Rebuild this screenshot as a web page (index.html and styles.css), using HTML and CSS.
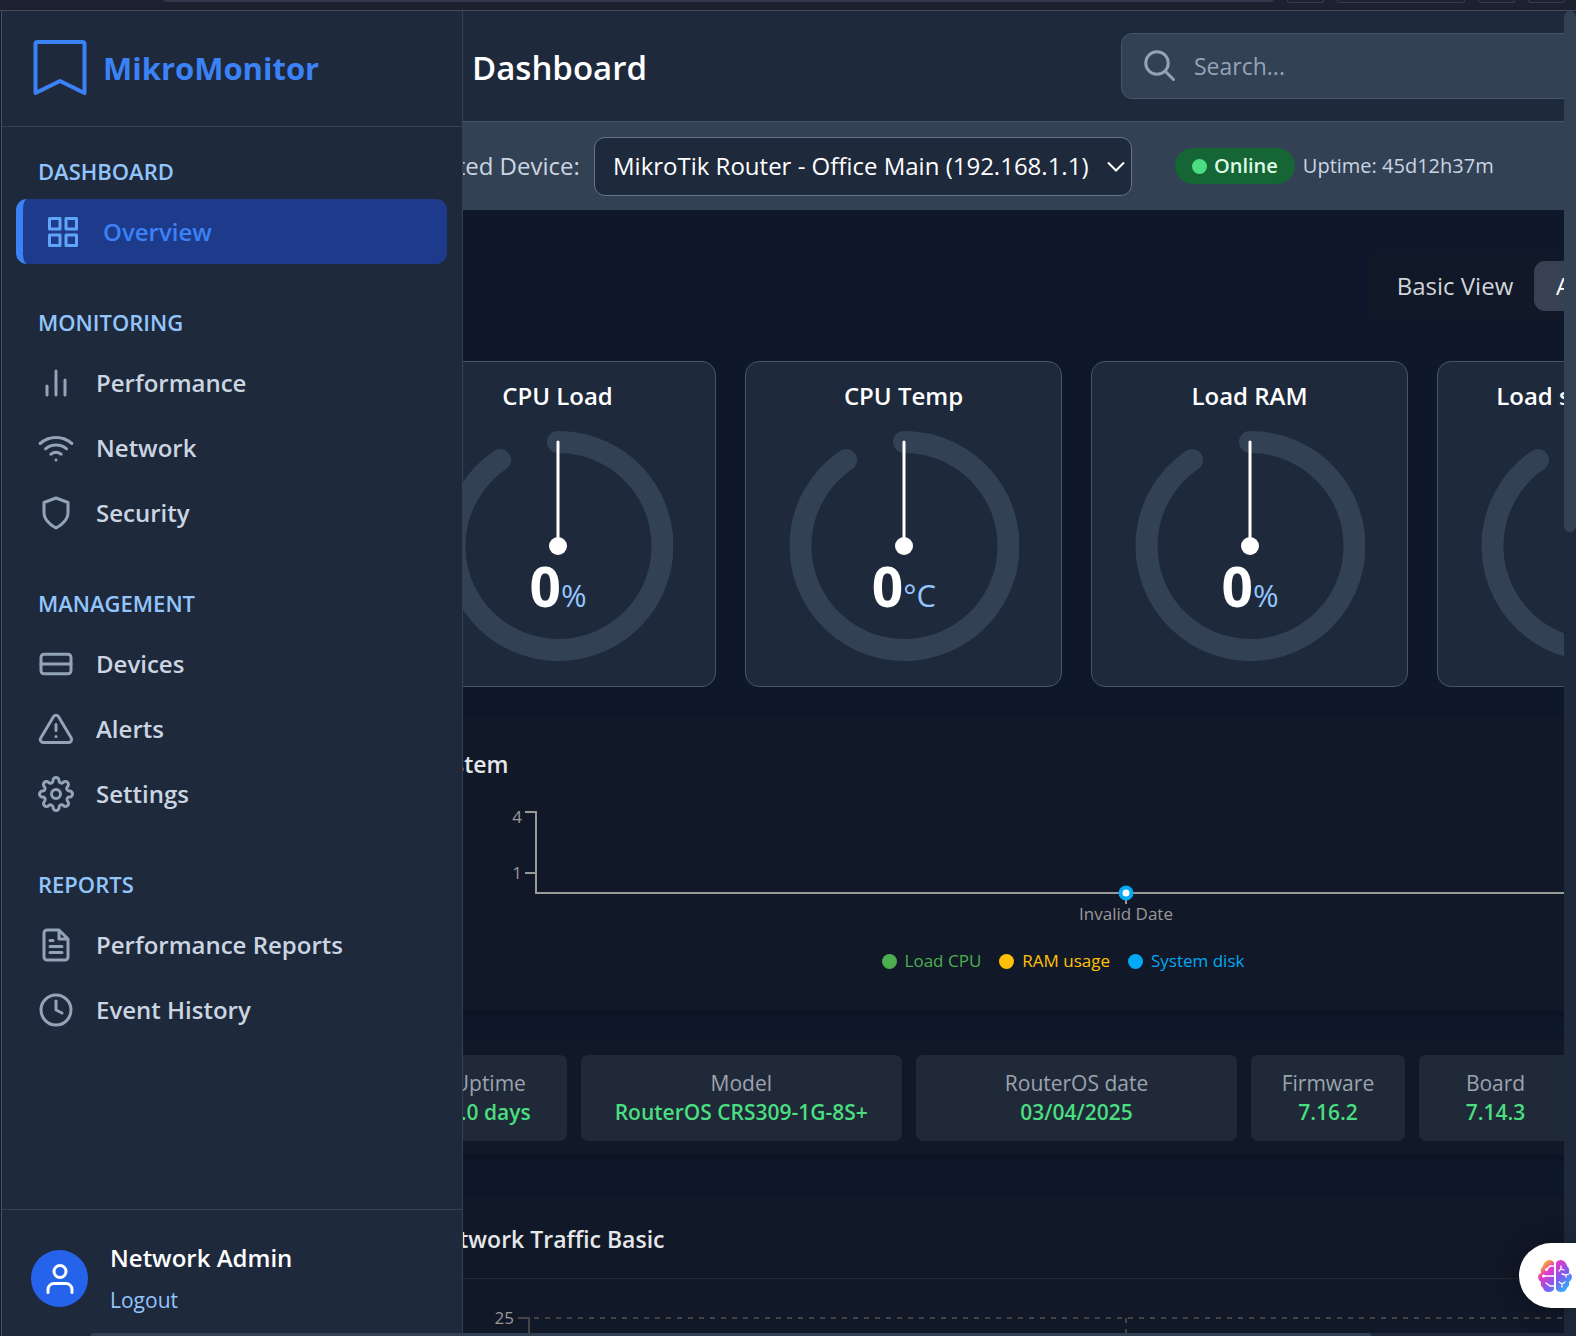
FILE: index.html
```html
<!DOCTYPE html>
<html lang="en">
<head>
<meta charset="utf-8">
<title>MikroMonitor - Dashboard</title>
<link rel="stylesheet" href="styles.css">
</head>
<body>
<svg class="defs" aria-hidden="true">
  <defs>
    <linearGradient id="brain-fill" x1="0" y1="0" x2="1" y2="1">
      <stop offset=".12" stop-color="#fbb914"/>
      <stop offset=".32" stop-color="#e836c8"/>
      <stop offset=".6" stop-color="#7b5cf0"/>
      <stop offset=".9" stop-color="#2fb4fb"/>
    </linearGradient>
    <symbol id="gauge" viewBox="0 0 230 230">
      <path d="M115 11A104 104 0 1 1 57 29" fill="none" stroke="#334155" stroke-width="22" stroke-linecap="round"/>
      <path d="M115 11V115" stroke="#fff" stroke-width="3" stroke-linecap="round"/>
      <circle cx="115" cy="115" r="9" fill="#fff"/>
    </symbol>
  </defs>
</svg>

<div class="window">
  <div class="toolbar" aria-hidden="true">
    <span class="address"></span>
    <span class="pill"></span>
    <span class="pill wide"></span>
    <span class="pill"></span>
    <span class="pill"></span>
  </div>

  <div class="frame">
    <div class="edge"></div>

    <main class="main">
      <div class="canvas">
        <header class="topbar">
          <h1>Dashboard</h1>
          <label class="search">
            <svg class="icon" viewBox="0 0 24 24" aria-hidden="true"><circle cx="10" cy="10" r="7.5"/><path d="M15.500 15.500L21 21"/></svg>
            <input type="search" placeholder="Search..." aria-label="Search">
          </label>
        </header>

        <div class="devicebar">
          <label for="device">Selected Device:</label>
          <div class="select">
            <select id="device"><option>MikroTik Router - Office Main (192.168.1.1)</option></select>
            <svg viewBox="0 0 18 12" aria-hidden="true"><path d="M1 1.500L9 9.500L17 1.500"/></svg>
          </div>
          <div class="status">
            <span class="online"><i></i>Online</span>
            <span>Uptime: 45d12h37m</span>
          </div>
        </div>

        <div class="content">
          <div class="views">
            <div class="toggle">
              <button type="button">Basic View</button>
              <button type="button" class="on">Advanced View</button>
            </div>
          </div>

          <section class="gauges">
            <article class="card">
              <h2>CPU Load</h2>
              <svg viewBox="0 0 230 230"><use href="#gauge"/><text x="115" y="176">0<tspan>%</tspan></text></svg>
            </article>
            <article class="card">
              <h2>CPU Temp</h2>
              <svg viewBox="0 0 230 230"><use href="#gauge"/><text x="115" y="176">0<tspan>°C</tspan></text></svg>
            </article>
            <article class="card">
              <h2>Load RAM</h2>
              <svg viewBox="0 0 230 230"><use href="#gauge"/><text x="115" y="176">0<tspan>%</tspan></text></svg>
            </article>
            <article class="card">
              <h2>Load system disk</h2>
              <svg viewBox="0 0 230 230"><use href="#gauge"/><text x="115" y="176">0<tspan>%</tspan></text></svg>
            </article>
          </section>

          <section class="panel system">
            <h2>System</h2>
            <svg class="chart" height="164">
              <path class="axis" d="M97 29H108V110H1290M97 90H108M698 110V121"/>
              <text x="94" y="40" text-anchor="end">4</text>
              <text x="94" y="96" text-anchor="end">1</text>
              <text x="698" y="137" text-anchor="middle">Invalid Date</text>
              <circle cx="698" cy="110" r="5.500" fill="#fff" stroke="#03a9f4" stroke-width="4"/>
            </svg>
            <ul class="legend">
              <li class="cpu">Load CPU</li>
              <li class="ram">RAM usage</li>
              <li class="disk">System disk</li>
            </ul>
          </section>

          <dl class="panel facts">
            <div><dt>Uptime</dt><dd>3.0 days</dd></div>
            <div class="two"><dt>Model</dt><dd>RouterOS CRS309-1G-8S+</dd></div>
            <div class="two"><dt>RouterOS date</dt><dd>03/04/2025</dd></div>
            <div><dt>Firmware</dt><dd>7.16.2</dd></div>
            <div><dt>Board</dt><dd>7.14.3</dd></div>
          </dl>

          <section class="panel traffic">
            <h2>Network Traffic Basic</h2>
            <svg class="chart" height="240">
              <path class="grid" d="M119 39H130V240"/>
              <path class="grid dashed" d="M135 39H1320M727 39V240"/>
              <text x="115" y="45" text-anchor="end">25</text>
            </svg>
          </section>
        </div>
      </div>
    </main>

    <aside class="sidebar">
      <div class="brand">
        <svg viewBox="0 0 54 56" aria-hidden="true"><path d="M2.500 4V53L27 41L51.500 53V4Q51.500 2 49.500 2H4.500Q2.500 2 2.500 4Z"/></svg>
        <span>MikroMonitor</span>
      </div>
      <nav>
        <section>
          <h3>DASHBOARD</h3>
          <a href="#" class="active"><svg class="icon" viewBox="0 0 24 24"><rect x="3" y="3" width="7" height="7"/><rect x="14" y="3" width="7" height="7"/><rect x="14" y="14" width="7" height="7"/><rect x="3" y="14" width="7" height="7"/></svg>Overview</a>
        </section>
        <section>
          <h3>MONITORING</h3>
          <a href="#"><svg class="icon" viewBox="0 0 24 24"><path d="M18 20V10M12 20V4M6 20V14"/></svg>Performance</a>
          <a href="#"><svg class="icon" viewBox="0 0 24 24"><path d="M5 12.550a11 11 0 0 1 14.080 0M1.420 9a16 16 0 0 1 21.160 0M8.530 16.110a6 6 0 0 1 6.950 0M12 20h.01"/></svg>Network</a>
          <a href="#"><svg class="icon" viewBox="0 0 24 24"><path d="M12 22s8-4 8-10V5l-8-3-8 3v7c0 6 8 10 8 10z"/></svg>Security</a>
        </section>
        <section>
          <h3>MANAGEMENT</h3>
          <a href="#"><svg class="icon" viewBox="0 0 24 24"><rect x="2" y="5.500" width="20" height="13" rx="2"/><path d="M2 12H22"/></svg>Devices</a>
          <a href="#"><svg class="icon" viewBox="0 0 24 24"><path d="M10.290 3.860L1.820 18a2 2 0 0 0 1.710 3h16.940a2 2 0 0 0 1.710-3L13.710 3.860a2 2 0 0 0-3.420 0zM12 9v4M12 17h.01"/></svg>Alerts</a>
          <a href="#"><svg class="icon" viewBox="0 0 24 24"><circle cx="12" cy="12" r="3"/><path d="M19.400 15a1.650 1.650 0 0 0 .33 1.820l.06.06a2 2 0 0 1-2.830 2.830l-.06-.06a1.650 1.650 0 0 0-1.820-.33 1.650 1.650 0 0 0-1 1.510V21a2 2 0 0 1-4 0v-.09A1.650 1.650 0 0 0 9 19.400a1.650 1.650 0 0 0-1.820.33l-.06.06a2 2 0 0 1-2.830-2.830l.06-.06a1.650 1.650 0 0 0 .33-1.820 1.650 1.650 0 0 0-1.510-1H3a2 2 0 0 1 0-4h.09A1.650 1.650 0 0 0 4.600 9a1.650 1.650 0 0 0-.33-1.820l-.06-.06a2 2 0 0 1 2.830-2.830l.06.06a1.650 1.650 0 0 0 1.820.33H9a1.650 1.650 0 0 0 1-1.510V3a2 2 0 0 1 4 0v.09a1.650 1.650 0 0 0 1 1.510 1.650 1.650 0 0 0 1.820-.33l.06-.06a2 2 0 0 1 2.830 2.830l-.06.06a1.650 1.650 0 0 0-.33 1.820V9a1.650 1.650 0 0 0 1.510 1H21a2 2 0 0 1 0 4h-.09a1.650 1.650 0 0 0-1.510 1z"/></svg>Settings</a>
        </section>
        <section>
          <h3>REPORTS</h3>
          <a href="#"><svg class="icon" viewBox="0 0 24 24"><path d="M14 2H6a2 2 0 0 0-2 2v16a2 2 0 0 0 2 2h12a2 2 0 0 0 2-2V8zM14 2v6h6M16 13H8M16 17H8M10 9H8"/></svg>Performance Reports</a>
          <a href="#"><svg class="icon" viewBox="0 0 24 24"><circle cx="12" cy="12" r="10"/><path d="M12 6v6l4 2"/></svg>Event History</a>
        </section>
      </nav>
      <div class="user">
        <span class="avatar"><svg class="icon" viewBox="0 0 24 24" aria-hidden="true"><path d="M20 21v-2a4 4 0 0 0-4-4H8a4 4 0 0 0-4 4v2"/><circle cx="12" cy="7" r="4"/></svg></span>
        <div>
          <strong>Network Admin</strong>
          <a href="#">Logout</a>
        </div>
      </div>
    </aside>

    <div class="vbar" aria-hidden="true"><i></i></div>
    <div class="hbar" aria-hidden="true"><i></i></div>
  </div>

  <button type="button" class="assistant" aria-label="Assistant">
    <svg viewBox="0 0 34 32" aria-hidden="true">
      <path fill="url(#brain-fill)" d="M16 3V29Q15 32 11 32Q6 32 5 28Q2 26 3 22Q0 20 0 17Q0 14 3 13Q2 8 5 6Q6 1 11 0Q15 0 16 3ZM18 3Q19 0 23 0Q28 1 29 6Q32 8 31 13Q34 14 34 17Q34 20 31 22Q32 26 29 28Q28 32 23 32Q19 32 18 29Z"/>
      <path fill="none" stroke="#fff" stroke-width="1.300" stroke-linecap="round" d="M16 6H12L9 9M6 16H16M16 26H12L8 23M23 6V9L21 11M23 9L26 10M24 14L28 15L31 14M28 15V17M21 22L24 24L27 22M24 24V27"/>
      <circle cx="8.500" cy="9.500" r="1.500" fill="#fff"/><circle cx="5.500" cy="16" r="1.500" fill="#fff"/>
    </svg>
  </button>
</div>
</body>
</html>
```
FILE: styles.css
```css
* { box-sizing: border-box; }

body {
  margin: 0;
  background: #0f172a;
  color: #fff;
  font-family: "Open Sans", "Noto Sans", sans-serif;
  font-size: 24px;
  line-height: 38px;
}

h1, h2, h3, dl, dd, ul { margin: 0; padding: 0; }
button, input, select { font: inherit; color: inherit; }
a { text-decoration: none; }
svg { display: block; flex: none; }

.defs { position: absolute; width: 0; height: 0; }

.icon {
  width: 36px;
  height: 36px;
  fill: none;
  stroke: currentColor;
  stroke-width: 2;
  stroke-linecap: round;
  stroke-linejoin: round;
}

.window {
  position: relative;
  display: flex;
  flex-direction: column;
  height: 100vh;
  overflow: hidden;
}

/* Bottom edge of the browser toolbar */
.toolbar {
  flex: none;
  display: flex;
  gap: 13px;
  height: 11px;
  padding: 0 11px 0 163px;
  background: #1c2130;
  border-bottom: 1px solid #454a5c;
}
.address { flex: 1; height: 2px; background: #31364b; border-radius: 0 0 4px 4px; }
.pill { width: 37px; height: 3px; border: 1px solid #363c50; border-top: 0; border-radius: 0 0 8px 8px; }
.pill.wide { width: 128px; }

.frame {
  position: relative;
  flex: 1;
  min-height: 0;
  display: grid;
  grid-template: minmax(0, 1fr) 3px / 2px minmax(0, 1fr) 12px;
}
.edge { grid-row: 1 / 3; background: #131a2b; border-right: 1px solid #4c5265; }
.main { grid-area: 1 / 2; overflow: hidden; }

.canvas { width: calc(100% + 190px); }

.vbar { grid-area: 1 / 3 / 3 / 4; background: #1e293b; }
.vbar i { display: block; height: 39.3%; background: #334155; border-radius: 6px; }
.hbar { grid-area: 2 / 2; z-index: 3; padding: 0 193px 0 89px; background: #1e293b; }
.hbar i { display: block; height: 3px; background: #334155; border-radius: 6px 6px 0 0; }

/* Header */
.topbar {
  display: flex;
  justify-content: space-between;
  align-items: center;
  height: 111px;
  padding-left: 470px;
  background: #1e293b;
  border-bottom: 1px solid #475569;
}
.topbar h1 { padding-top: 3px; font-size: 33px; font-weight: 600; }
.search {
  display: flex;
  align-items: center;
  gap: 16px;
  width: 633px;
  height: 66px;
  padding: 0 20px;
  background: #334155;
  border: 1px solid #475569;
  border-radius: 11px;
  color: #94a3b8;
  font-size: 23px;
}
.search input { flex: 1; min-width: 0; padding: 0; background: none; border: 0; outline: 0; }
.search input::placeholder { color: #94a3b8; opacity: 1; }

/* Device bar */
.devicebar {
  display: flex;
  align-items: center;
  height: 88px;
  padding-left: 397px;
  background: #334155;
  color: #cbd5e1;
}
.devicebar > label { width: 180px; text-align: right; white-space: nowrap; }
.select { position: relative; width: 538px; margin: 0 43px 0 15px; }
.select select {
  display: block;
  width: 100%;
  height: 59px;
  padding: 0 36px 0 18px;
  appearance: none;
  background: #1e293b;
  border: 1px solid #64748b;
  border-radius: 11px;
  color: #fff;
}
.select svg {
  position: absolute;
  top: 24px;
  right: 7px;
  width: 18px;
  height: 12px;
  fill: none;
  stroke: #fff;
  stroke-width: 2;
}
.status { display: flex; align-items: center; gap: 8px; font-size: 21px; white-space: nowrap; }
.online {
  display: flex;
  align-items: center;
  gap: 7px;
  height: 36px;
  padding: 0 17px;
  background: #166534;
  border-radius: 18px;
  color: #dcfce7;
  font-weight: 600;
}
.status span { font-size: 20px; }
.online i { width: 15px; height: 15px; background: #4ade80; border-radius: 50%; }

/* Content */
.content { padding: 43px 0 0 397px; }
.views { display: flex; justify-content: flex-end; margin-bottom: 42px; }
.toggle { display: flex; padding: 8px; background: #111827; border-radius: 11px; }
.toggle button {
  height: 50px;
  min-width: 158px;
  padding: 0 20px;
  background: none;
  border: 0;
  border-radius: 11px;
  color: #d1d5db;
  white-space: nowrap;
}
.toggle .on { min-width: 212px; background: #374151; color: #fff; }

.gauges { display: grid; grid-template-columns: repeat(4, 1fr); gap: 29px; margin-bottom: 29px; }
.card {
  display: flex;
  flex-direction: column;
  align-items: center;
  gap: 16px;
  padding: 15px 0 25px;
  background: #1e293b;
  border: 1px solid #475569;
  border-radius: 14px;
}
h2 { font-size: 24px; font-weight: 600; }
.card svg { width: 230px; height: 230px; }
.card text { fill: #fff; font-size: 55px; font-weight: 700; text-anchor: middle; }
.card tspan { fill: #93c5fd; font-size: 31px; font-weight: 400; }

.panel { background: #111827; box-shadow: 0 4px 10px rgba(0, 0, 0, .2); }
.panel h2 { color: #e5e7eb; font-size: 23px; }
.system { margin-bottom: 29px; padding: 29px 29px 36px; }
.chart { width: 100%; overflow: hidden; }
.chart text { fill: #999; font-size: 17px; }
.axis { fill: none; stroke: #999; stroke-width: 2; }
.grid { fill: none; stroke: #444; stroke-width: 2; }
.dashed { stroke-dasharray: 5 6; }

.legend {
  display: flex;
  justify-content: center;
  gap: 18px;
  padding-right: 27px;
  list-style: none;
  font-size: 17px;
  line-height: 28px;
}
.legend li { display: flex; align-items: center; gap: 8px; }
.legend li::before { content: ""; width: 15px; height: 15px; background: currentColor; border-radius: 50%; }
.cpu { color: #4caf50; }
.ram { color: #ffc107; }
.disk { color: #03a9f4; }

.facts {
  display: grid;
  grid-template-columns: repeat(8, 1fr);
  gap: 14px;
  margin-bottom: 43px;
  padding: 15px 14px 14px;
  line-height: 29px;
  text-align: center;
  white-space: nowrap;
}
.facts div { padding: 14px 0; background: #1f2937; border-radius: 7px; }
.facts .two { grid-column: span 2; }
dt { color: #9ca3af; font-size: 21px; }
dd { color: #4ade80; font-size: 21px; font-weight: 600; }

.traffic h2 { padding: 22px 29px 20px; border-bottom: 1px solid #1f2937; }

/* Sidebar lies over the page */
.sidebar {
  position: absolute;
  inset: 0 auto 0 2px;
  z-index: 2;
  display: flex;
  flex-direction: column;
  width: 461px;
  background: #1e293b;
  border-right: 1px solid #334155;
}
.brand {
  display: flex;
  align-items: center;
  gap: 16px;
  height: 116px;
  padding: 0 31px 2px;
  border-bottom: 1px solid #334155;
  color: #3b82f6;
  font-size: 31px;
  font-weight: 700;
}
.brand svg { width: 54px; height: 56px; fill: none; stroke: currentColor; stroke-width: 4; stroke-linejoin: round; }

nav { flex: 1; display: flex; flex-direction: column; gap: 44px; padding: 30px 15px 0 14px; }
nav h3 {
  margin-bottom: 14px;
  padding-left: 22px;
  color: #93c5fd;
  font-size: 22px;
  font-weight: 600;
  line-height: 28px;
}
nav a {
  display: flex;
  align-items: center;
  gap: 22px;
  height: 65px;
  padding-left: 22px;
  border-radius: 11px;
  color: #cbd5e1;
  font-weight: 600;
}
nav .icon { color: #94a3b8; }
nav .active { background: #1e3a8a; border-left: 7px solid #3b82f6; color: #3b82f6; }
nav .active .icon { color: #60a5fa; }

.user {
  display: flex;
  align-items: center;
  gap: 22px;
  height: 127px;
  padding: 11px 29px 0;
  border-top: 1px solid #334155;
}
.user div { display: flex; flex-direction: column; gap: 4px; }
.user strong { font-weight: 600; }
.user a { color: #93c5fd; font-size: 21px; }
.avatar {
  display: grid;
  place-items: center;
  width: 57px;
  height: 57px;
  background: #2563eb;
  border-radius: 50%;
}

.assistant {
  position: absolute;
  right: 0;
  bottom: 28px;
  z-index: 4;
  width: 57px;
  height: 65px;
  padding: 0 0 0 19px;
  background: #fff;
  border: 0;
  border-radius: 33px 0 0 33px;
  box-shadow: 0 0 24px rgba(0, 0, 0, .35);
}
.assistant svg { width: 34px; height: 32px; }
```
